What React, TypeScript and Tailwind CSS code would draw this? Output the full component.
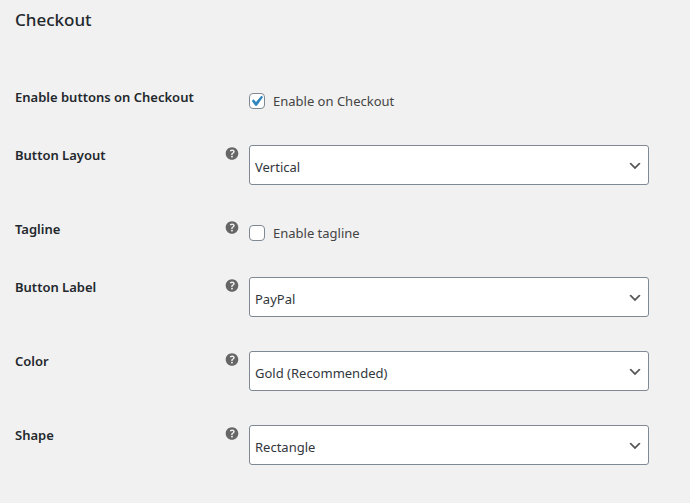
import { ReactNode, useState } from "react";

type SelectField = {
  id: string;
  label: string;
  options: string[];
};

function HelpIcon() {
  return (
    <svg viewBox="0 0 20 20" className="h-[18px] w-[18px] shrink-0 fill-[#666]" role="img" aria-label="Help">
      <path d="M17 9.5c0-3.87-3.14-7-7-7-3.87 0-7 3.13-7 7s3.13 7 7 7c3.86 0 7-3.13 7-7zm-6.3 1.48H9.14v-.43c0-.38.08-.7.24-.98s.46-.57.88-.89c.41-.29.68-.53.81-.71.14-.18.2-.39.2-.62 0-.25-.09-.44-.28-.58-.19-.13-.45-.19-.79-.19-.58 0-1.25.19-2 .57l-.64-1.28c.87-.49 1.8-.74 2.77-.74.81 0 1.45.2 1.92.58.48.39.71.91.71 1.55 0 .43-.09.8-.29 1.11-.19.32-.57.67-1.11 1.06-.38.28-.61.49-.71.63-.1.15-.15.34-.15.57v.35zm-1.47 2.74c-.18-.17-.27-.42-.27-.73 0-.33.08-.58.26-.75s.43-.25.77-.25c.32 0 .57.09.75.26s.27.42.27.74c0 .3-.09.55-.27.72-.18.18-.43.27-.75.27-.33 0-.58-.09-.76-.26z" />
    </svg>
  );
}

function Row({ id, label, help, children }: { id: string; label: string; help?: boolean; children: ReactNode }) {
  return (
    <div className="flex gap-2 pt-[19px] pb-[15px]">
      <div className="flex w-[226px] shrink-0 items-start justify-between">
        <label htmlFor={id} className="text-[13px] leading-5 font-semibold text-[#23282d]">
          {label}
        </label>
        {help && <HelpIcon />}
      </div>
      <div className="min-w-0 flex-1">{children}</div>
    </div>
  );
}

function CheckboxRow({ id, label, text, help, initial }: { id: string; label: string; text: string; help?: boolean; initial: boolean }) {
  const [checked, setChecked] = useState(initial);

  return (
    <Row id={id} label={label} help={help}>
      <label className="flex w-fit items-center gap-2 pt-1 text-[13px] leading-5 text-[#444]">
        <span className="relative h-4 w-4">
          <input
            id={id}
            type="checkbox"
            checked={checked}
            onChange={(e) => setChecked(e.target.checked)}
            className="block h-4 w-4 appearance-none rounded-[4px] border border-[#7e8993] bg-white"
          />
          {checked && (
            <svg viewBox="0 0 16 16" className="pointer-events-none absolute inset-0 h-4 w-4 fill-[#2f86bd]">
              <path d="M12.3 2.7l1.8 1.2-6.2 8.9H6.3L2.8 8l1.8-1.7 2.4 2.6z" />
            </svg>
          )}
        </span>
        {text}
      </label>
    </Row>
  );
}

function SelectRow({ id, label, options }: SelectField) {
  return (
    <Row id={id} label={label} help>
      <div className="relative max-w-[400px]">
        <select
          id={id}
          className="block h-10 w-full appearance-none rounded-[3px] border border-[#7e8993] bg-white pt-1.5 pr-6 pl-[5px] text-[13px] text-[#32373c]"
        >
          {options.map((option) => (
            <option key={option}>{option}</option>
          ))}
        </select>
        <svg viewBox="0 0 20 20" className="pointer-events-none absolute top-[13px] right-[6px] h-4 w-4 fill-[#555]">
          <path d="M5 6l5 5 5-5 2 1-7 7-7-7 2-1z" />
        </svg>
      </div>
    </Row>
  );
}

export default function App() {
  return (
    <main className="min-h-screen bg-[#f1f1f1] px-[15px] pt-2 pb-5 font-['Noto_Sans','Open_Sans',sans-serif]">
      <h2 className="text-[17px] leading-6 font-medium text-[#23282d]">Checkout</h2>
      <form className="pt-9">
        <CheckboxRow id="enable" label="Enable buttons on Checkout" text="Enable on Checkout" initial />
        <SelectRow id="layout" label="Button Layout" options={["Vertical", "Horizontal"]} />
        <CheckboxRow id="tagline" label="Tagline" text="Enable tagline" help initial={false} />
        <SelectRow id="button-label" label="Button Label" options={["PayPal", "Checkout", "Buy Now", "Pay"]} />
        <SelectRow id="color" label="Color" options={["Gold (Recommended)", "Blue", "Silver", "Black"]} />
        <SelectRow id="shape" label="Shape" options={["Rectangle", "Pill"]} />
      </form>
    </main>
  );
}
